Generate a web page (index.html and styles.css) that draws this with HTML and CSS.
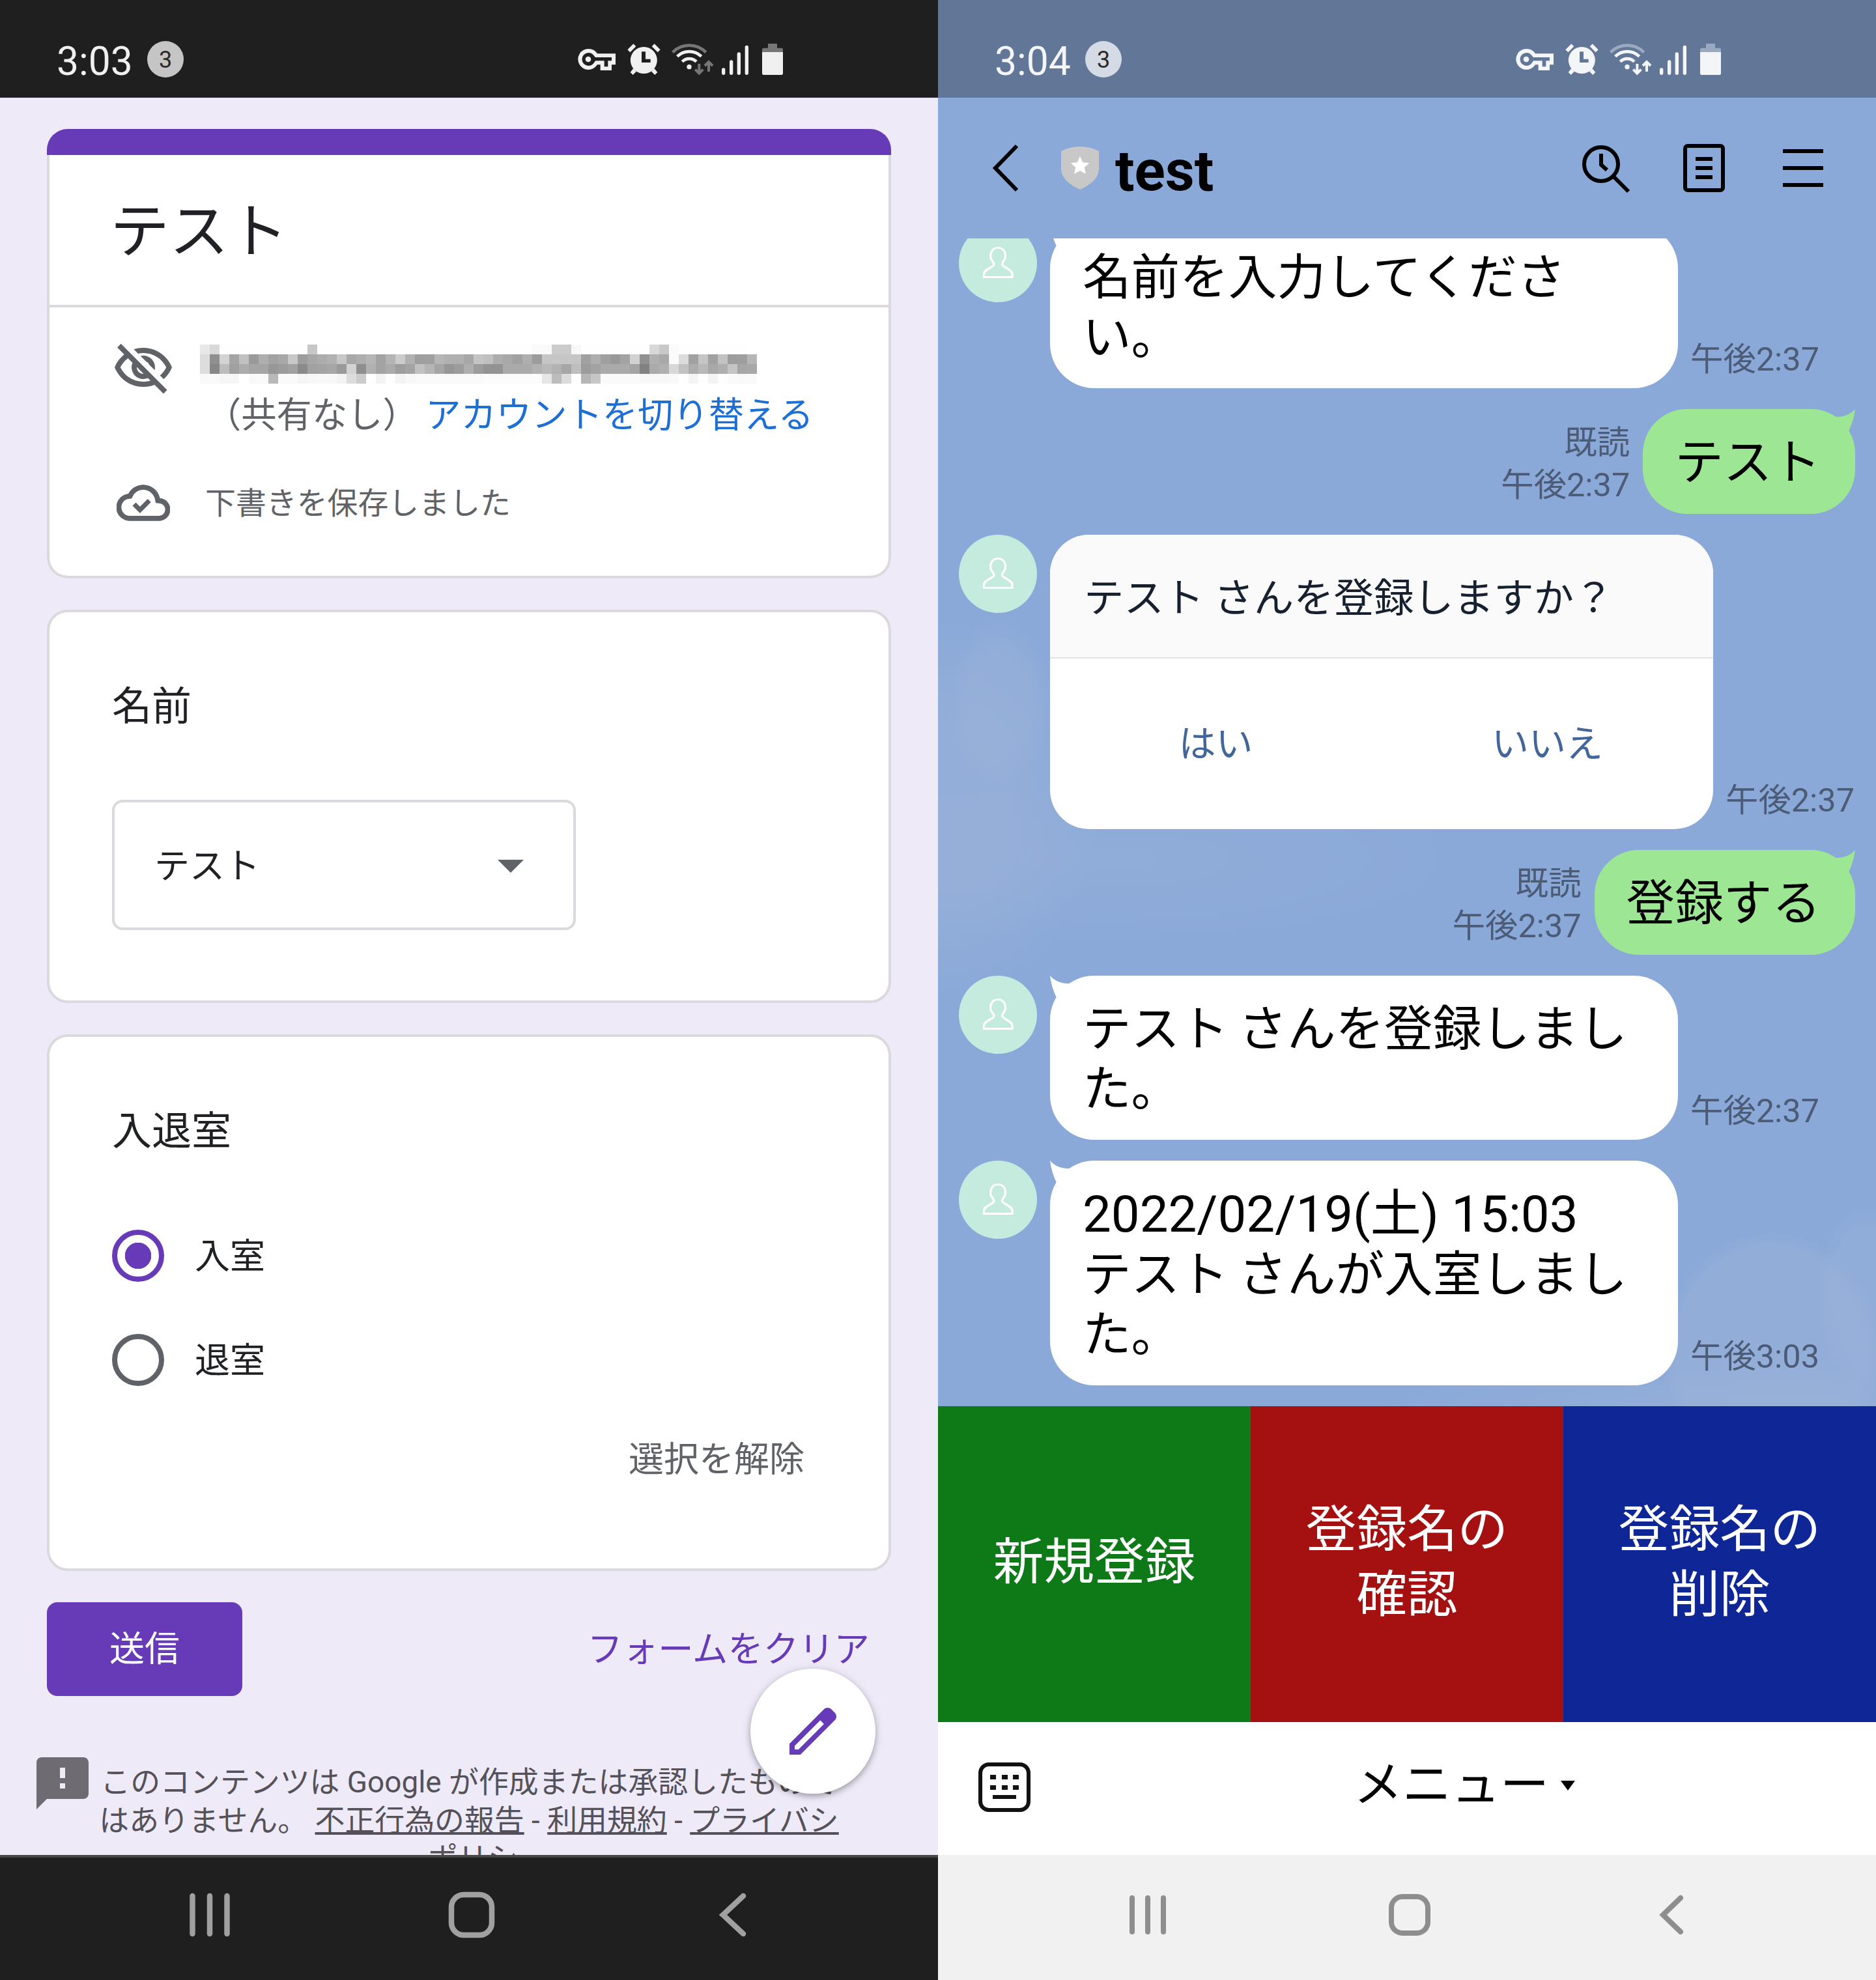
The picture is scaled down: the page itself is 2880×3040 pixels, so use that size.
FILE: index.html
```html
<!DOCTYPE html>
<html lang="ja">
<head>
  <meta charset="UTF-8">
  <meta name="viewport" content="width=device-width, initial-scale=1.0">
  <title>テスト</title>
  <link rel="stylesheet" href="styles.css">
</head>
<body>

  <!-- shared icons -->
  <svg class="defs" width="0" height="0">
    <symbol id="status-icons" viewBox="0 0 1140 270">
      <g fill="currentColor">
        <path fill-rule="evenodd" d="M130 75a48 48 0 0 1 41 22h84v51h-18v26h-52v-26h-14a48 48 0 1 1-41-73zm0 18a30 30 0 1 0 26 46l6-9h41v27h17v-27h17v-16h-75l-6-7a30 30 0 0 0-26-14z"/>
        <circle cx="129" cy="123" r="13"/>
        <path fill-rule="evenodd" d="M385 66a61 61 0 1 1 0 123 61 61 0 0 1 0-123zm-10 22v50h41v-16h-23v-34z"/>
        <path d="M337 52l12 12-27 27-12-12zM434 52l27 27-12 12-27-27zM337 165l14 14-16 16-12-12zM433 165l15 18-12 12-16-16z"/>
        <circle cx="594" cy="158" r="11"/>
      </g>
      <g fill="none" stroke="currentColor" stroke-width="14">
        <path d="M562 134a46 46 0 0 1 65 0M539 110a79 79 0 0 1 111 0"/>
        <path class="dim" d="M518 91a107 107 0 0 1 153 0"/>
      </g>
      <g class="arrows" fill="none" stroke-width="12">
        <path d="M640 144v44M622 170l18 18 18-18M684 180v-44M666 153l18-18 18 18"/>
      </g>
      <g fill="none" stroke="currentColor" stroke-width="16" stroke-linecap="round">
        <path d="M752 171v16M788 135v52M823 99v88M859 67v120"/>
      </g>
      <path class="dim-fill" d="M957 51h42v20h20q7 0 7 7v12h-96v-12q0-7 7-7h20z"/>
      <path fill="currentColor" d="M930 90h96v98q0 7-7 7h-82q-7 0-7-7z"/>
    </symbol>
    <symbol id="person" viewBox="0 0 120 120">
      <path fill="none" stroke="#fff" stroke-width="3.2" d="M60 36.500c8 0 11.500 6 11.500 13.500 0 6-5 7-5 12 0 4.500 15.500 7 15.500 15v4.500H38.500V77c0-8 15.500-10.500 15.500-15 0-5-5.500-6-5.500-12 0-7.500 4-13.500 11.500-13.500z"/>
    </symbol>
    <symbol id="tail" viewBox="0 0 36 36">
      <path fill="currentColor" d="M0 12Q24 14 36 0 34 18 25 36z"/>
    </symbol>
  </svg>

  <!-- left phone: form -->
  <div class="phone phone-form">
    <div class="status">
      <span class="clock">3:03</span>
      <span class="count">3</span>
      <svg class="status-icons"><use href="#status-icons"/></svg>
    </div>

    <main class="form">
      <section class="card-title">
        <div class="card-bar"></div>
        <div class="card-body">
          <h1>テスト</h1>
          <div class="account">
            <svg class="icon-eye" viewBox="0 0 24 24"><path d="M12 6c3.790 0 7.170 2.130 8.820 5.500-.59 1.220-1.420 2.270-2.410 3.120l1.410 1.410c1.390-1.230 2.490-2.770 3.180-4.530C21.270 7.110 17 4 12 4c-1.270 0-2.490.2-3.640.57l1.650 1.650C10.660 6.090 11.320 6 12 6zm-1.070 1.140L13 9.210c.57.25 1.030.71 1.280 1.280l2.070 2.070c.08-.34.14-.7.14-1.070C16.500 9.010 14.480 7 12 7c-.37 0-.72.05-1.070.14zM2.010 3.870l2.680 2.680C3.060 7.830 1.770 9.530 1 11.500 2.730 15.890 7 19 12 19c1.520 0 2.980-.29 4.320-.82l3.420 3.420 1.410-1.410L3.420 2.450 2.010 3.870zm7.500 7.500l2.610 2.610c-.04.01-.08.02-.12.02-1.380 0-2.500-1.120-2.500-2.500 0-.05.01-.08.01-.13zm-3.400-3.400l1.750 1.750c-.23.55-.36 1.150-.36 1.780 0 2.480 2.020 4.500 4.500 4.500.63 0 1.230-.13 1.770-.36l.98.98c-.88.24-1.800.38-2.750.38-3.790 0-7.170-2.130-8.820-5.500.7-1.430 1.720-2.610 2.930-3.530z"/></svg>
            <div class="account-text">
              <svg class="mosaic" id="mosaic" viewBox="0 0 57 4" preserveAspectRatio="none"></svg>
              <p>（共有なし） <a href="#">アカウントを切り替える</a></p>
            </div>
          </div>
          <div class="draft">
            <svg class="icon-cloud" viewBox="0 0 24 24"><path d="M19.350 10.040C18.670 6.590 15.640 4 12 4 9.110 4 6.610 5.640 5.360 8.040 2.350 8.360 0 10.900 0 14c0 3.310 2.690 6 6 6h13c2.760 0 5-2.240 5-5 0-2.640-2.050-4.780-4.650-4.960zM19 18H6c-2.210 0-4-1.790-4-4 0-2.050 1.530-3.760 3.560-3.970l1.070-.11.5-.95C8.080 7.140 9.940 6 12 6c2.620 0 4.880 1.860 5.390 4.430l.3 1.500 1.530.11c1.560.1 2.780 1.410 2.780 2.960 0 1.650-1.350 3-3 3z"/><path class="check" d="M7.900 12.600l2.600 2.600 4.200-4.200"/></svg>
            <span>下書きを保存しました</span>
          </div>
        </div>
      </section>

      <section class="card card-name">
        <h2>名前</h2>
        <div class="select">
          <span>テスト</span>
          <svg class="caret" viewBox="0 0 40 20"><path d="M0 0h40L20 20z"/></svg>
        </div>
      </section>

      <section class="card card-room">
        <h2>入退室</h2>
        <div class="radios">
          <div class="radio checked"><i></i><span>入室</span></div>
          <div class="radio"><i></i><span>退室</span></div>
        </div>
        <div class="unselect">選択を解除</div>
      </section>

      <div class="actions">
        <button class="submit">送信</button>
        <a class="clear" href="#">フォームをクリア</a>
      </div>

      <footer class="notice">
        <svg class="icon-feedback" viewBox="0 0 24 24"><path d="M20 2H4c-1.100 0-1.990.9-1.990 2L2 22l4-4h14c1.100 0 2-.9 2-2V4c0-1.100-.9-2-2-2zm-7 12h-2v-2h2v2zm0-4h-2V6h2v4z"/></svg>
        <p>このコンテンツは Google が作成または承認したもので<br>はありません。 <a href="#">不正行為の報告</a> - <a href="#">利用規約</a> - <a href="#">プライバシ<br>ー ポリシー</a></p>
      </footer>

      <div class="fab">
        <svg viewBox="0 0 24 24"><path d="M20.410 4.940l-1.350-1.350c-.78-.78-2.050-.78-2.830 0L3 16.820V21h4.180L20.410 7.770c.79-.78.79-2.050 0-2.830zm-14 14.120L5 19v-1.360l9.820-9.820 1.410 1.410-9.820 9.830z"/></svg>
      </div>
    </main>

    <div class="navbar">
      <svg viewBox="0 0 1440 188">
        <g fill="none" stroke="#a0a0a0" stroke-width="8.500">
          <path stroke-linecap="round" d="M295.500 59v58M322 59v58M348.500 59v58"/>
          <rect x="693" y="57" width="62" height="62" rx="19"/>
          <path stroke-linecap="round" d="M1141 59l-31 29 31 29"/>
        </g>
      </svg>
    </div>
  </div>

  <!-- right phone: chat -->
  <div class="phone phone-chat">
    <div class="status">
      <span class="clock">3:04</span>
      <span class="count">3</span>
      <svg class="status-icons"><use href="#status-icons"/></svg>
    </div>

    <header class="chat-header">
      <svg class="icon-back" viewBox="0 0 44 76"><path fill="none" stroke="#000" stroke-width="6" d="M39 4L6 38l33 34"/></svg>
      <svg class="icon-shield" viewBox="0 0 58 66"><path fill="#c8c8c8" d="M0 7Q14 0 29 0T58 7V36Q56 54 29 66 2 54 0 36z"/><path fill="#fff" d="M29 15l4.200 9.200 10 1.100-7.400 6.800 2 9.900-8.800-5-8.800 5 2-9.900-7.400-6.800 10-1.100z"/></svg>
      <h1>test</h1>
      <svg class="icon-search" viewBox="0 0 76 76"><g fill="none" stroke="#000" stroke-width="6"><circle cx="31" cy="31" r="26"/><path d="M49 49l24 24M31 15v17l9 8"/></g></svg>
      <svg class="icon-note" viewBox="0 0 64 74"><g fill="none" stroke="#000" stroke-width="6"><rect x="3" y="3" width="58" height="68" rx="4"/><path d="M19 23h26M19 37h26M19 51h26"/></g></svg>
      <svg class="icon-menu" viewBox="0 0 62 58"><path fill="none" stroke="#000" stroke-width="6" d="M0 3h62M0 29h62M0 55h62"/></svg>
    </header>

    <div class="chat">
      <div class="messages">
        <div class="msg">
          <svg class="avatar"><use href="#person"/></svg>
          <div class="bubble"><svg class="tail"><use href="#tail"/></svg>名前を入力してくださ<br>い。</div>
          <div class="time">午後2:37</div>
        </div>
        <div class="msg me">
          <div class="time">既読<br>午後2:37</div>
          <div class="bubble"><svg class="tail"><use href="#tail"/></svg>テスト</div>
        </div>
        <div class="msg">
          <svg class="avatar"><use href="#person"/></svg>
          <div class="confirm">
            <p>テスト さんを登録しますか？</p>
            <div class="choices"><span>はい</span><span>いいえ</span></div>
          </div>
          <div class="time">午後2:37</div>
        </div>
        <div class="msg me">
          <div class="time">既読<br>午後2:37</div>
          <div class="bubble"><svg class="tail"><use href="#tail"/></svg>登録する</div>
        </div>
        <div class="msg">
          <svg class="avatar"><use href="#person"/></svg>
          <div class="bubble"><svg class="tail"><use href="#tail"/></svg>テスト さんを登録しまし<br>た。</div>
          <div class="time">午後2:37</div>
        </div>
        <div class="msg">
          <svg class="avatar"><use href="#person"/></svg>
          <div class="bubble"><svg class="tail"><use href="#tail"/></svg><span class="num">2022/02/19(土) 15:03</span><br>テスト さんが入室しまし<br>た。</div>
          <div class="time">午後3:03</div>
        </div>
      </div>
    </div>

    <div class="richmenu">
      <div class="tile green">新規登録</div>
      <div class="tile red">登録名の<br>確認</div>
      <div class="tile blue">登録名の<br>削除</div>
    </div>

    <div class="menubar">
      <svg class="icon-keyboard" viewBox="0 0 80 76"><rect x="3" y="3" width="74" height="70" rx="13" fill="none" stroke="#111" stroke-width="6"/><path fill="#111" d="M18 19h9v7h-9zM36 19h9v7h-9zM53 19h9v7h-9zM18 35h9v7h-9zM36 35h9v7h-9zM53 35h9v7h-9zM22 50h36v6H22z"/></svg>
      <div class="menu-label">メニュー<svg viewBox="0 0 22 15"><path d="M0 0h22L11 15z"/></svg></div>
    </div>

    <div class="navbar">
      <svg viewBox="0 0 1440 192">
        <g fill="none" stroke="#8e8e8e" stroke-width="8">
          <path stroke-linecap="round" d="M298 66v52M322 66v52M346 66v52"/>
          <rect x="696" y="64" width="56" height="56" rx="17"/>
          <path stroke-linecap="round" d="M1140 66l-27 26 27 26"/>
        </g>
      </svg>
    </div>
  </div>

  <script src="script.js"></script>
</body>
</html>
```
FILE: styles.css
```css
* {
  box-sizing: border-box;
}

body {
  margin: 0;
  width: 2880px;
  height: 3040px;
  display: flex;
  overflow: hidden;
  font-family: Roboto, "Noto Sans CJK JP", sans-serif;
}

h1, h2, p {
  margin: 0;
  font-weight: normal;
}

svg {
  display: block;
  flex: none;
}

.defs {
  position: absolute;
}

.phone {
  width: 1440px;
  height: 3040px;
  display: flex;
  flex-direction: column;
  overflow: hidden;
}

/* status bar */
.status {
  height: 150px;
  flex: none;
  display: flex;
  align-items: flex-start;
  padding-left: 87px;
}

.phone-form .status {
  background-color: #1f1f1f;
  color: #f0f0f0;
}

.phone-chat .status {
  background-color: #627798;
  color: #f3f5f9;
}

.clock {
  width: 139px;
  margin-top: 60px;
  font-size: 60.5px;
  line-height: 70px;
}

.count {
  width: 56px;
  height: 56px;
  margin-top: 63px;
  border-radius: 50%;
  background-color: #c5c5c5;
  color: #2a2a2a;
  font-size: 36px;
  line-height: 58px;
  text-align: center;
}

.phone-chat .count {
  background-color: #d5dbe4;
}

.status-icons {
  width: 380px;
  height: 90px;
  margin: 50px 0 0 578px;
}

.phone-form {
  --dim: #767676;
  --arrows: #767676;
}

.phone-chat {
  --dim: #9ba9c0;
  --arrows: #f3f5f9;
}

.dim {
  stroke: var(--dim);
}

.dim-fill {
  fill: var(--dim);
}

.arrows {
  stroke: var(--arrows);
}

/* form */
.form {
  position: relative;
  height: 2698px;
  flex: none;
  padding: 48px 72px 0;
  background-color: #eeeaf8;
  color: #202124;
  overflow: hidden;
}

.card-title {
  height: 690px;
  border-radius: 32px;
  overflow: hidden;
}

.card-bar {
  height: 40px;
  background-color: #673ab7;
}

.card-body {
  height: 650px;
  border: 4px solid #dadade;
  border-top: 0;
  border-radius: 0 0 32px 32px;
  background-color: #fff;
}

.card-body h1 {
  height: 234px;
  padding: 4px 0 0 93px;
  border-bottom: 4px solid #dadade;
  font-size: 91px;
  line-height: 229px;
}

.account {
  display: flex;
  padding: 46px 0 0 96px;
  color: #5f6368;
  font-size: 54.3px;
  line-height: 70px;
}

.icon-eye {
  width: 96px;
  height: 96px;
  fill: #5f6368;
}

.account-text {
  margin-left: 39px;
  padding-top: 11px;
}

.mosaic {
  width: 855px;
  height: 60px;
}

.account-text p {
  margin-top: 14px;
  padding-left: 9px;
  white-space: nowrap;
  word-spacing: -2px;
}

.account-text a {
  color: #1d6fd6;
  text-decoration: none;
}

.draft {
  display: flex;
  align-items: center;
  margin-top: 56px;
  padding-left: 103px;
  color: #5f6368;
  font-size: 46.9px;
  line-height: 82px;
}

.draft span {
  margin: 3px 0 0 54px;
}

.icon-cloud {
  width: 82px;
  height: 82px;
  fill: #5f6368;
  stroke: #5f6368;
  stroke-width: .3;
}

.check {
  fill: none;
  stroke-width: 2.1;
}

.card {
  margin-top: 48px;
  padding: 105px 96px 0;
  border: 4px solid #dadade;
  border-radius: 32px;
  background-color: #fff;
}

.card h2 {
  font-size: 61px;
  line-height: 80px;
}

.card-name {
  height: 604px;
}

.select {
  width: 712px;
  height: 200px;
  margin-top: 103px;
  padding: 4px 76px 0 61px;
  border: 4px solid #dadade;
  border-radius: 16px;
  display: flex;
  align-items: center;
  justify-content: space-between;
  font-size: 54px;
}

.select span {
  margin-bottom: 10px;
}

.caret {
  width: 40px;
  height: 20px;
  fill: #5f6368;
}

.card-room {
  height: 824px;
}

.radios {
  margin-top: 111px;
  display: flex;
  flex-direction: column;
  gap: 80px;
}

.radio {
  display: flex;
  gap: 47px;
  font-size: 54px;
  line-height: 84px;
  height: 80px;
}

.radio i {
  width: 80px;
  height: 80px;
  border: 8px solid #5f6368;
  border-radius: 50%;
}

.radio.checked i {
  border-color: #673ab7;
  background: radial-gradient(circle, #673ab7 20px, #fff 20.5px);
}

.unselect {
  margin: 74px 33px 0 0;
  color: #5f6368;
  font-size: 54px;
  line-height: 80px;
  text-align: right;
}

.actions {
  height: 144px;
  margin-top: 48px;
  display: flex;
  align-items: center;
  justify-content: space-between;
  padding-right: 33px;
}

.submit {
  width: 300px;
  height: 144px;
  padding: 2px 0 0;
  border: 0;
  border-radius: 16px;
  background-color: #673ab7;
  color: #fff;
  font: 54px/142px Roboto, "Noto Sans CJK JP", sans-serif;
}

.clear {
  margin-bottom: 10px;
  color: #673ab7;
  font-size: 54.4px;
  text-decoration: none;
}

.notice {
  display: flex;
  margin: 86px 0 0 -24px;
  color: #555158;
}

.icon-feedback {
  width: 96px;
  height: 96px;
  fill: #6e6b72;
}

.notice p {
  width: 1136px;
  margin: 17px 0 0 8px;
  font-size: 45.9px;
  line-height: 58.5px;
  text-align: center;
  white-space: nowrap;
}

.notice a {
  color: inherit;
  text-decoration: underline;
  text-decoration-thickness: 4px;
  text-decoration-skip-ink: none;
  text-underline-offset: 2px;
}

/* floats over the footer */
.fab {
  position: absolute;
  right: 96px;
  bottom: 94px;
  width: 192px;
  height: 192px;
  padding: 48px;
  border-radius: 50%;
  background-color: #fff;
  box-shadow: 0 4px 8px rgba(0, 0, 0, .25), 0 2px 16px rgba(0, 0, 0, .12);
}

.fab svg {
  width: 96px;
  height: 96px;
  fill: #673ab7;
}

.navbar {
  flex: 1;
}

.phone-form .navbar {
  border-top: 4px solid #474747;
  background-color: #1f1f1f;
}

.phone-chat .navbar {
  background-color: #f1f1f1;
}

/* chat */
.phone-chat {
  background-color: #8ba9d8;
  background-image:
    radial-gradient(ellipse 80px 130px at 95px 1080px, rgba(160, 182, 216, .3) 60%, rgba(160, 182, 216, 0)),
    radial-gradient(ellipse 240px 290px at 10px 1240px, rgba(160, 182, 216, .4) 40%, rgba(160, 182, 216, 0)),
    radial-gradient(ellipse 560px 130px at 260px 1320px, rgba(160, 182, 216, .25), rgba(160, 182, 216, 0)),
    radial-gradient(ellipse 170px 190px at 1280px 2080px, rgba(160, 182, 216, .35) 85%, rgba(160, 182, 216, 0)),
    radial-gradient(ellipse 70px 140px at 1420px 1990px, rgba(160, 182, 216, .25) 70%, rgba(160, 182, 216, 0)),
    radial-gradient(ellipse 620px 90px at 1300px 2170px, rgba(160, 182, 216, .35) 30%, rgba(160, 182, 216, 0));
}

.chat-header {
  height: 216px;
  flex: none;
  display: flex;
  align-items: center;
  padding: 0 81px 0 82px;
}

.icon-back {
  width: 44px;
  height: 76px;
}

.icon-shield {
  width: 58px;
  height: 66px;
  margin-left: 63px;
}

.chat-header h1 {
  margin: 8px auto 0 25px;
  font-size: 87.5px;
  font-weight: bold;
}

.icon-search {
  width: 76px;
  height: 76px;
  margin-top: 2px;
}

.icon-note {
  width: 64px;
  height: 74px;
  margin-left: 81px;
}

.icon-menu {
  width: 62px;
  height: 58px;
  margin-left: 89px;
}

.chat {
  height: 1793px;
  flex: none;
  display: flex;
  flex-direction: column;
  justify-content: flex-end;
  overflow: hidden;
}

.messages {
  display: flex;
  flex-direction: column;
  gap: 32px;
  padding: 0 32px 32px;
}

.msg {
  display: flex;
  align-items: flex-start;
}

.msg.me {
  justify-content: flex-end;
}

.avatar {
  width: 120px;
  height: 120px;
  margin-right: 20px;
  border-radius: 50%;
  background-color: #c5ebdf;
}

.bubble {
  position: relative;
  flex: none;
  width: 964px;
  padding: 37px 50px 31px;
  border-radius: 68px;
  background-color: #fff;
  color: #000;
  font-size: 74.6px;
  line-height: 92px;
  white-space: nowrap;
  word-spacing: -3px;
}

.num {
  font-size: 78px;
  word-spacing: 0;
}

.me .bubble {
  width: auto;
  padding: 37px 53px 32px 49px;
  background-color: #9de693;
}

.tail {
  position: absolute;
  top: 0;
  left: 0;
  width: 36px;
  height: 36px;
  color: #fff;
  transform: scaleX(-1);
}

.me .tail {
  left: auto;
  right: 0;
  color: #9de693;
  transform: none;
}

.time {
  align-self: flex-end;
  flex: none;
  margin: 0 0 12px 19px;
  color: #4c5b76;
  font-size: 50.4px;
  line-height: 65px;
  white-space: nowrap;
}

.me .time {
  margin: 0 20px 12px 0;
  text-align: right;
}

.confirm {
  flex: none;
  width: 1018px;
  height: 452px;
  border-radius: 60px;
  background-color: #fff;
  overflow: hidden;
}

.confirm p {
  height: 190px;
  padding: 6px 0 0 52px;
  border-bottom: 2px solid #e3e3e3;
  background-color: #fafafa;
  color: #17202e;
  font-size: 61.4px;
  line-height: 184px;
}

.choices {
  display: flex;
  padding-top: 2px;
  color: #42659a;
  font-size: 57px;
  line-height: 259px;
  text-align: center;
}

.choices span {
  flex: 1;
}

/* rich menu */
.richmenu {
  height: 485px;
  flex: none;
  display: grid;
  grid-template-columns: repeat(3, 1fr);
}

.tile {
  display: flex;
  align-items: center;
  justify-content: center;
  padding-bottom: 6px;
  color: #fff;
  font-size: 77.6px;
  line-height: 100px;
  text-align: center;
}

.green {
  background-color: #0e7a17;
}

.red {
  background-color: #a51011;
}

.blue {
  background-color: #0e2696;
}

.menubar {
  height: 204px;
  flex: none;
  display: flex;
  align-items: center;
  padding-left: 62px;
  background-color: #fff;
}

.icon-keyboard {
  width: 80px;
  height: 76px;
  margin-bottom: 4px;
}

.menu-label {
  display: flex;
  align-items: center;
  margin: -26px 0 0 496px;
  color: #000;
  font-size: 75px;
}

.menu-label svg {
  width: 22px;
  height: 15px;
  margin: 17px 0 0 18px;
}
```
FILE: script.js
```js
// hidden mail address, one hex pair (grey level) per block
var rows = [
  'e8d9fefefefefefefefefec7fefefefefefefefefefefefefefefefefefefefefefefafacbcbf8fefefefefefefed8c8fafefefefefefefe',
  'dd8fd3a4c19aaea2a8c89da7acb1c7a8aeb6a3b4ccb19ea0b6b0b0a7c4c0ada8a1af9cc6c6c6c5a0aea099a3d291b0a9fbdca1c5a1c29d9eb6',
  'dd87bca0aca5a5979ca18aa1a3a69ad28fb1a3aa9da3c1b5a5969cae9c9393aaaaaab2b9b2a6be9ca3aaaaaaa482abb0d8c2adb9a8aec4a6a8',
  'f9f9f6f6fff9f9b8fafaf5f7f8f8f3dcccfef3fdf4f8f9f9f9f9f9f9f9fbfbfbfbfbfbe6bcdcfeb5c7fafafafaf8f8f8f9fef5fef4fdfaf9f9'
];

var mosaic = document.getElementById('mosaic');
var ns = 'http://www.w3.org/2000/svg';

rows.forEach(function (row, y) {
  for (var x = 0; x < row.length / 2; x++) {
    var c = row.substr(x * 2, 2);
    var rect = document.createElementNS(ns, 'rect');
    rect.setAttribute('x', x);
    rect.setAttribute('y', y);
    rect.setAttribute('width', 1);
    rect.setAttribute('height', 1);
    rect.setAttribute('fill', '#' + c + c + c);
    rect.setAttribute('shape-rendering', 'crispEdges');
    mosaic.appendChild(rect);
  }
});
```
